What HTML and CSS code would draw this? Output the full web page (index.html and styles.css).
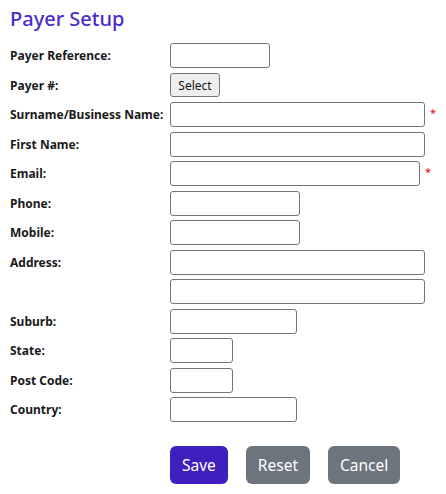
FILE: index.html
```html
<!DOCTYPE html>
<html lang="en">
<head>
    <meta charset="UTF-8">
    <meta name="viewport" content="width=device-width, initial-scale=1.0">
    <title>Payer Setup</title>
    <link rel="stylesheet" href="styles.css">
</head>
<body>
    <div class="container">
        <h1>Payer Setup</h1>
        <form class="payer-form" onsubmit="return false;">
            <div class="row">
                <label for="payer-ref">Payer Reference:</label>
                <input type="text" id="payer-ref" class="w-100">
            </div>
            <div class="row">
                <label>Payer #:</label>
                <button type="button" class="select-button">Select</button>
            </div>
            <div class="row">
                <label for="surname">Surname/Business Name:</label>
                <input type="text" id="surname" class="w-255">
                <span class="required">*</span>
            </div>
            <div class="row">
                <label for="first-name">First Name:</label>
                <input type="text" id="first-name" class="w-255">
            </div>
            <div class="row">
                <label for="email">Email:</label>
                <input type="text" id="email" class="w-250">
                <span class="required">*</span>
            </div>
            <div class="row">
                <label for="phone">Phone:</label>
                <input type="text" id="phone" class="w-130">
            </div>
            <div class="row">
                <label for="mobile">Mobile:</label>
                <input type="text" id="mobile" class="w-130">
            </div>
            <div class="row">
                <label for="address1">Address:</label>
                <input type="text" id="address1" class="w-255">
            </div>
            <div class="row">
                <label></label>
                <input type="text" id="address2" class="w-255">
            </div>
            <div class="row">
                <label for="suburb">Suburb:</label>
                <input type="text" id="suburb" class="w-127">
            </div>
            <div class="row">
                <label for="state">State:</label>
                <input type="text" id="state" class="w-63">
            </div>
            <div class="row">
                <label for="postcode">Post Code:</label>
                <input type="text" id="postcode" class="w-63">
            </div>
            <div class="row">
                <label for="country">Country:</label>
                <input type="text" id="country" class="w-127">
            </div>
            <div class="actions">
                <button type="submit" class="btn btn-primary">Save</button>
                <button type="reset" class="btn btn-secondary">Reset</button>
                <button type="button" class="btn btn-secondary">Cancel</button>
            </div>
        </form>
    </div>
</body>
</html>
```

FILE: styles.css
```css
body {
    font-family: "Noto Sans", Arial, sans-serif;
    margin: 0;
    padding: 0;
    background-color: #fff;
    color: #212529;
}
.container {
    padding: 0 10px;
}
h1 {
    font-size: 20px;
    font-weight: 500;
    line-height: 26px;
    color: #4a2dc6;
    margin: 6px 0 9px;
}
.row {
    display: flex;
    align-items: center;
    height: 29.5px;
}
.row label {
    width: 160px;
    flex: none;
    font-size: 12px;
    font-weight: bold;
    color: #1a1a1a;
}
.row input {
    height: 25px;
    box-sizing: border-box;
    border: 1px solid #767676;
    border-radius: 3px;
    padding: 1px 4px;
    font-size: 13px;
}
.w-63 { width: 63px; }
.w-100 { width: 100px; }
.w-127 { width: 127px; }
.w-130 { width: 130px; }
.w-250 { width: 250px; }
.w-255 { width: 255px; }
.required {
    color: #e00;
    font-size: 11px;
    margin-left: 5px;
    position: relative;
    top: -2px;
}
.select-button {
    height: 24px;
    width: 50px;
    padding: 0;
    font-family: inherit;
    font-size: 12px;
    color: #111;
    background-color: #efefef;
    border: 1px solid #767676;
    border-radius: 3px;
}
.actions {
    display: flex;
    gap: 18px;
    margin-top: 21px;
    padding-left: 160px;
}
.btn {
    height: 38px;
    padding: 0 12px;
    font-family: inherit;
    font-size: 15.5px;
    color: #fff;
    border: none;
    border-radius: 6px;
    cursor: pointer;
}
.btn-primary {
    background-color: #3f20bf;
}
.btn-secondary {
    background-color: #6c757d;
}
```
